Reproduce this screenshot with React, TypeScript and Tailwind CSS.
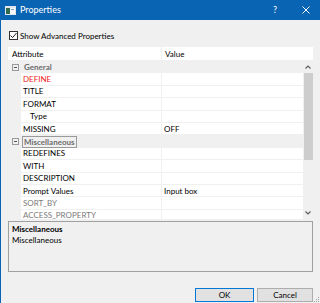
import React from "react";

type Row =
  | { kind: "cat"; label: string; selected?: boolean }
  | { kind: "prop"; name: string; value?: string; tone?: "red" | "gray"; indent?: boolean };

const rows: Row[] = [
  { kind: "cat", label: "General" },
  { kind: "prop", name: "DEFINE", tone: "red" },
  { kind: "prop", name: "TITLE" },
  { kind: "prop", name: "FORMAT" },
  { kind: "prop", name: "Type", indent: true },
  { kind: "prop", name: "MISSING", value: "OFF" },
  { kind: "cat", label: "Miscellaneous", selected: true },
  { kind: "prop", name: "REDEFINES" },
  { kind: "prop", name: "WITH" },
  { kind: "prop", name: "DESCRIPTION" },
  { kind: "prop", name: "Prompt Values", value: "Input box" },
  { kind: "prop", name: "SORT_BY", tone: "gray" },
  { kind: "prop", name: "ACCESS_PROPERTY", tone: "gray" },
];

function Minus() {
  return (
    <svg width="7" height="7" viewBox="0 0 7 7">
      <rect x="0.5" y="0.5" width="6" height="6" fill="none" stroke="#9a9a9a" />
      <line x1="2" y1="3.5" x2="5" y2="3.5" stroke="#555" />
    </svg>
  );
}

export default function App() {
  return (
    <div
      className="w-[320px] h-[303px] bg-[#f0f0f0] overflow-hidden relative text-[8px] text-black"
      style={{ fontFamily: 'Lato, "Noto Sans", sans-serif' }}
    >
      {/* Title bar */}
      <div className="h-[20px] bg-[#0a64b4] flex items-center text-white">
        <svg className="ml-[5px]" width="11" height="9" viewBox="0 0 11 9">
          <rect x="0" y="0" width="11" height="9" fill="#dfe6ee" />
          <rect x="1" y="2" width="9" height="6" fill="#f7f7f7" />
          <rect x="1" y="2" width="4" height="6" fill="#2f6b4f" />
          <rect x="6" y="3" width="3" height="1" fill="#7da3c9" />
        </svg>
        <span className="ml-[4px] text-[9px]">Properties</span>
        <span className="ml-auto mr-[25px] text-[9px]">?</span>
        <svg className="mr-[10px]" width="8" height="8" viewBox="0 0 8 8">
          <path d="M0.5 0.5 L7.5 7.5 M7.5 0.5 L0.5 7.5" stroke="white" strokeWidth="1" />
        </svg>
      </div>

      <div className="border-l border-[#0a64b4] h-[283px] pl-[7px] pr-[7px] flex flex-col">
        {/* Checkbox row */}
        <div className="h-[13px] mt-[9px] flex items-center">
          <div className="ml-[1px] w-[9px] h-[9px] bg-white border border-[#333] flex items-center justify-center">
            <svg width="7" height="7" viewBox="0 0 7 7">
              <path d="M0.5 3.5 L2.6 5.6 L6.5 1" fill="none" stroke="#222" strokeWidth="1" />
            </svg>
          </div>
          <span className="ml-[2px]">Show Advanced Properties</span>
        </div>

        {/* Grid header */}
        <div className="mt-[5px] h-[13px] flex gap-px">
          <div className="w-[153px] bg-white flex items-center pl-[4px]">Attribute</div>
          <div className="flex-1 bg-white flex items-center pl-[3px]">Value</div>
        </div>

        {/* Grid body */}
        <div className="mt-px h-[158px] flex overflow-hidden">
          <div className="flex-1 flex flex-col">
            {rows.map((r, i) =>
              r.kind === "cat" ? (
                <div key={i} className="h-[12.4px] shrink-0 flex items-center bg-[#f0f0f0]">
                  <div className="w-[13px] flex justify-center pl-[1px]">
                    <Minus />
                  </div>
                  <span
                    className={
                      "font-bold text-[#6d6d6d] ml-[1px] px-[1px] leading-[10px] " +
                      (r.selected ? "border border-[#9a9a9a]" : "border border-transparent")
                    }
                  >
                    {r.label}
                  </span>
                </div>
              ) : (
                <div key={i} className="h-[12.4px] shrink-0 flex">
                  <div className="w-[13px] bg-[#f0f0f0]" />
                  <div
                    className={
                      "w-[140px] bg-white border-b border-[#f0f0f0] flex items-center " +
                      (r.indent ? "pl-[9px] " : "pl-[2px] ") +
                      (r.tone === "red" ? "text-[#f01818]" : r.tone === "gray" ? "text-[#7a7a7a]" : "")
                    }
                  >
                    {r.name}
                  </div>
                  <div className="w-px bg-[#f0f0f0]" />
                  <div className="flex-1 bg-white border-b border-[#f0f0f0] flex items-center pl-[2px]">
                    {r.value ?? ""}
                  </div>
                </div>
              )
            )}
          </div>
          {/* Scrollbar */}
          <div className="w-[10px] bg-[#f0f0f0] flex flex-col items-center">
            <svg className="mt-[4px]" width="6" height="4" viewBox="0 0 6 4">
              <path d="M0.5 3.5 L3 1 L5.5 3.5" fill="none" stroke="#606060" strokeWidth="1.2" />
            </svg>
            <div className="mt-[4px] w-[9px] h-[87px] bg-[#cdcdcd]" />
            <div className="flex-1" />
            <svg className="mb-[4px]" width="6" height="4" viewBox="0 0 6 4">
              <path d="M0.5 0.5 L3 3 L5.5 0.5" fill="none" stroke="#606060" strokeWidth="1.2" />
            </svg>
          </div>
        </div>

        {/* Description */}
        <div className="mt-[2px] h-[51px] border border-[#a0a0a0] px-[3px] pt-[2px]">
          <div className="font-bold h-[11px] leading-[11px]">Miscellaneous</div>
          <div className="h-[11px] leading-[11px]">Miscellaneous</div>
        </div>

        {/* Buttons */}
        <div className="mt-[16px] flex justify-end gap-[3px]">
          <button className="w-[59px] h-[14px] bg-[#e1e1e1] border border-[#0078d7] flex items-center justify-center">
            OK
          </button>
          <button className="w-[56px] h-[14px] bg-[#e1e1e1] border border-[#adadad] flex items-center justify-center">
            Cancel
          </button>
        </div>
      </div>

      {/* Resize grip */}
      <svg className="absolute right-0 bottom-0" width="8" height="8" viewBox="0 0 8 8">
        <rect x="6" y="2" width="1" height="1" fill="#a0a0a0" />
        <rect x="4" y="4" width="1" height="1" fill="#a0a0a0" />
        <rect x="6" y="4" width="1" height="1" fill="#a0a0a0" />
        <rect x="2" y="6" width="1" height="1" fill="#a0a0a0" />
        <rect x="4" y="6" width="1" height="1" fill="#a0a0a0" />
        <rect x="6" y="6" width="1" height="1" fill="#a0a0a0" />
      </svg>
    </div>
  );
}
